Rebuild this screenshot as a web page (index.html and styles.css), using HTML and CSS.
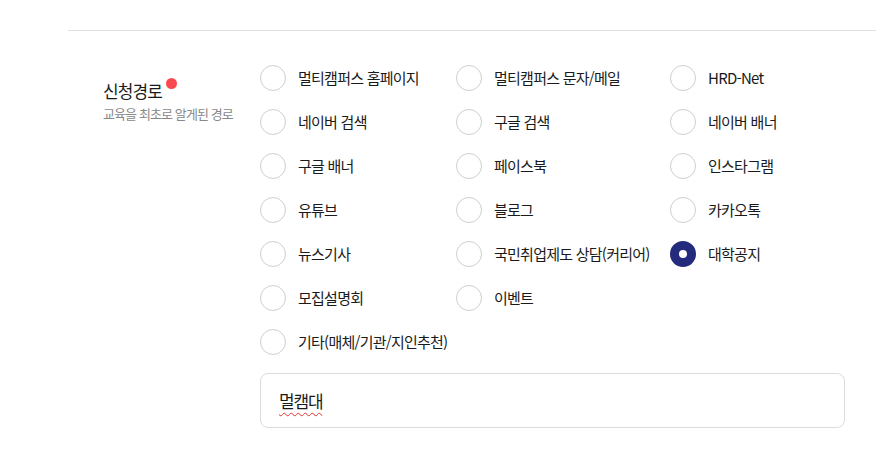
FILE: index.html
```html
<!DOCTYPE html>
<html lang="ko">
<head>
<meta charset="utf-8">
<link rel="stylesheet" href="styles.css">
</head>
<body>
<div class="page">
  <div class="divider"></div>
  <div class="field">
    <div class="field-label">
      <div class="title">신청경로<span class="req"></span></div>
      <div class="desc">교육을 최초로 알게된 경로</div>
    </div>
    <div class="field-body">
      <div class="options">
        <label class="opt"><span class="radio"></span><span class="txt">멀티캠퍼스 홈페이지</span></label>
        <label class="opt"><span class="radio"></span><span class="txt">멀티캠퍼스 문자/메일</span></label>
        <label class="opt"><span class="radio"></span><span class="txt">HRD-Net</span></label>
        <label class="opt"><span class="radio"></span><span class="txt">네이버 검색</span></label>
        <label class="opt"><span class="radio"></span><span class="txt">구글 검색</span></label>
        <label class="opt"><span class="radio"></span><span class="txt">네이버 배너</span></label>
        <label class="opt"><span class="radio"></span><span class="txt">구글 배너</span></label>
        <label class="opt"><span class="radio"></span><span class="txt">페이스북</span></label>
        <label class="opt"><span class="radio"></span><span class="txt">인스타그램</span></label>
        <label class="opt"><span class="radio"></span><span class="txt">유튜브</span></label>
        <label class="opt"><span class="radio"></span><span class="txt">블로그</span></label>
        <label class="opt"><span class="radio"></span><span class="txt">카카오톡</span></label>
        <label class="opt"><span class="radio"></span><span class="txt">뉴스기사</span></label>
        <label class="opt"><span class="radio"></span><span class="txt">국민취업제도 상담(커리어)</span></label>
        <label class="opt"><span class="radio checked"></span><span class="txt">대학공지</span></label>
        <label class="opt"><span class="radio"></span><span class="txt">모집설명회</span></label>
        <label class="opt"><span class="radio"></span><span class="txt">이벤트</span></label>
        <label class="opt full"><span class="radio"></span><span class="txt">기타(매체/기관/지인추천)</span></label>
      </div>
      <div class="input-box"><span class="typed">멀캠대</span></div>
    </div>
  </div>
</div>
</body>
</html>
```

FILE: styles.css
```css
* { box-sizing: border-box; }
html, body { margin: 0; padding: 0; background: #fff; }
body {
  font-family: "Noto Sans CJK KR", "Noto Sans", sans-serif;
  color: #222;
  width: 876px;
  height: 462px;
  overflow: hidden;
}
.page { padding-left: 68px; padding-top: 30px; }
.divider { height: 1px; background: #e1e1e1; }
.field { display: flex; padding-top: 34px; }
.field-label { width: 192px; padding-left: 35px; padding-top: 14px; }
.title {
  font-size: 17px;
  line-height: 24px;
  letter-spacing: -0.85px;
  color: #1a1a1a;
  position: relative;
  display: inline-block;
}
.req {
  position: absolute;
  right: -15px;
  top: -1px;
  width: 11px;
  height: 11px;
  border-radius: 50%;
  background: #f94b4f;
}
.desc {
  font-size: 13px;
  line-height: 16px;
  letter-spacing: -0.9px;
  color: #888;
  margin-top: 3px;
}
.field-body { width: 585px; }
.options {
  display: grid;
  grid-template-columns: 196px 214px 1fr;
  grid-auto-rows: 44px;
}
.opt {
  display: flex;
  align-items: center;
  height: 26px;
}
.opt.full { grid-column: 1 / -1; }
.radio {
  width: 26px;
  height: 26px;
  border-radius: 50%;
  border: 1.5px solid #cfcfcf;
  flex: none;
  background: #fff;
}
.radio.checked {
  border: 9px solid #242a7c;
}
.txt {
  margin-left: 12px;
  font-size: 15px;
  letter-spacing: -0.75px;
  color: #1a1a1a;
  line-height: 20px;
}
.input-box {
  height: 55px;
  border: 1px solid #dcdcdc;
  border-radius: 8px;
  padding-left: 18px;
  display: flex;
  align-items: center;
}
.typed {
  font-size: 17px;
  letter-spacing: -1.2px;
  color: #1a1a1a;
  text-decoration: underline wavy #e8322f;
  text-decoration-thickness: 1px;
  text-underline-offset: 4px;
}
```
